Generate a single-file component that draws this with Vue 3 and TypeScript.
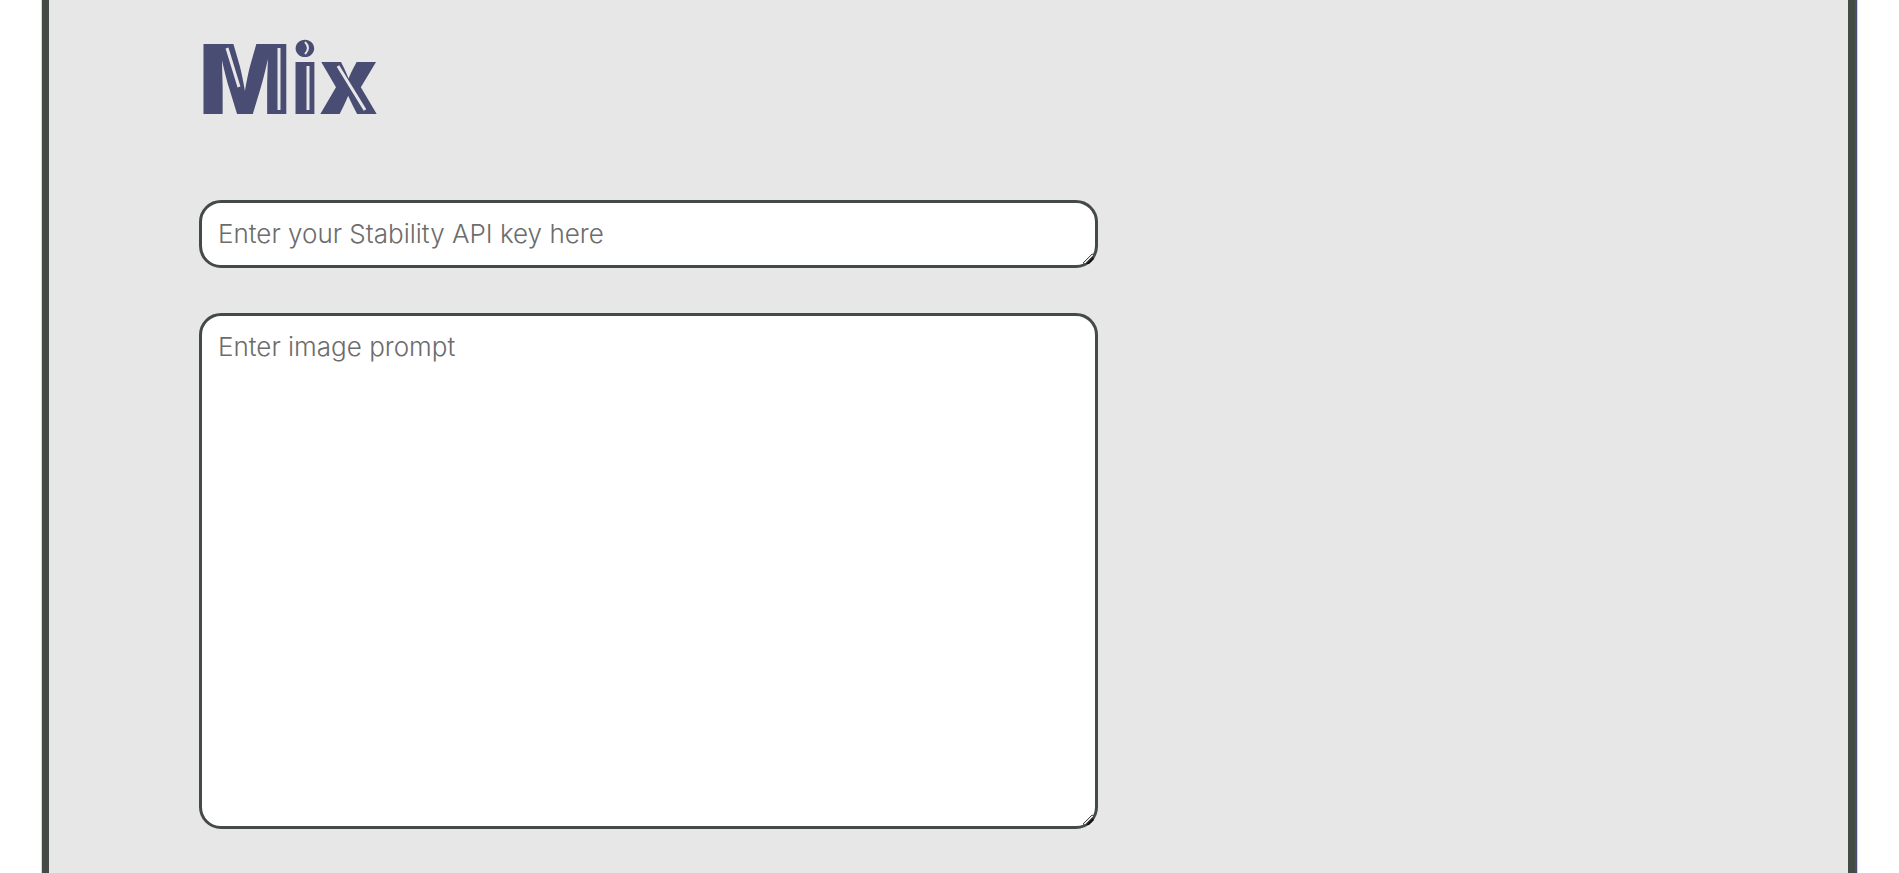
<script setup lang="ts">
import { ref } from 'vue'

const apiKey = ref<string>('')
const prompt = ref<string>('')
</script>

<template>
  <main class="frame">
    <h1 class="title">
      Mix
      <svg class="shine" viewBox="0 0 180 104" aria-hidden="true">
        <path d="M28 21 L40 60 M80 21 V83 M109 39 V83 M139 39 L166 83" />
        <path class="glint" d="M106 15 Q112 21 106 27" />
      </svg>
    </h1>
    <form class="fields" @submit.prevent>
      <div class="box">
        <textarea v-model="apiKey" class="field key" aria-label="Stability API key" placeholder="Enter your Stability API key here"></textarea>
        <svg class="grip" viewBox="0 0 18 18" aria-hidden="true">
          <path class="grip-shade" d="M6 14 L13 7 L14 9 L9 14 Z" />
          <path class="grip-edge" d="M3 13 L12 4 L14 5 L5 14 Z" />
        </svg>
      </div>
      <div class="box">
        <textarea v-model="prompt" class="field prompt" aria-label="Image prompt" placeholder="Enter image prompt"></textarea>
        <svg class="grip" viewBox="0 0 18 18" aria-hidden="true">
          <path class="grip-shade" d="M6 14 L13 7 L14 9 L9 14 Z" />
          <path class="grip-edge" d="M3 13 L12 4 L14 5 L5 14 Z" />
        </svg>
      </div>
    </form>
  </main>
</template>

<style>
body {
  background: #fff;
}
</style>

<style scoped>
.frame {
  box-sizing: border-box;
  min-height: 100vh;
  margin: 0 44px 0 42px;
  padding: 27px 0 44px 150px;
  border: solid #444b46;
  border-width: 0 7px;
  background: #e7e7e7;
  box-shadow: 2px 0 #4a4d73, 3px 0 #d5cfe4, -1px 0 #d4d5e2;
}

.title {
  position: relative;
  width: max-content;
  margin: 0 0 69px;
  color: #4a4d73;
  font: 900 96px/104px Inter, sans-serif;
}

.shine {
  position: absolute;
  top: 0;
  left: 0;
  width: 180px;
  height: 104px;
  fill: none;
  stroke: #e7e7e7;
  stroke-width: 3;
}

.glint {
  stroke-width: 2;
}

.fields {
  display: flex;
  flex-direction: column;
  gap: 45px;
  width: calc(50% + 74px);
}

.box {
  position: relative;
  display: flex;
}

.field {
  box-sizing: border-box;
  width: 100%;
  margin: 0;
  padding: 16px;
  border: 3px solid #444b46;
  border-radius: 22px;
  background: #fff;
  color: #444b46;
  font: 300 26px/30px Inter, sans-serif;
  outline: none;
  resize: vertical;
}

.field::placeholder {
  color: #6c6c6c;
}

.field::-webkit-resizer {
  background: transparent;
}

.key {
  height: 68px;
}

.prompt {
  height: 516px;
}

.grip {
  position: absolute;
  right: 0;
  bottom: 0;
  width: 18px;
  height: 18px;
  pointer-events: none;
}

.grip-shade {
  fill: #111;
}

.grip-edge {
  fill: #e7e7e7;
  stroke: #444b46;
}
</style>
